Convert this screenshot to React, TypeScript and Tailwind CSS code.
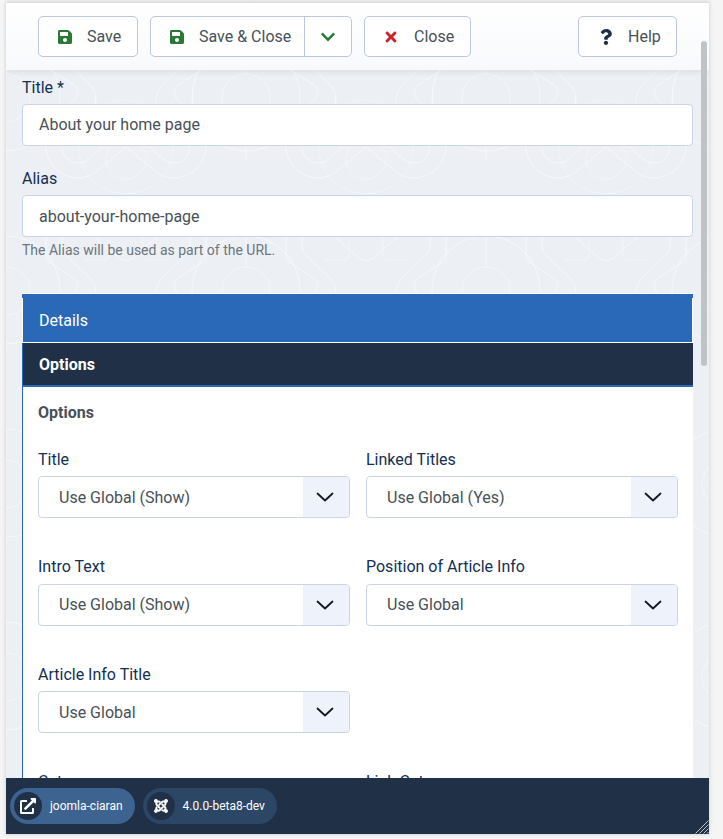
import { FaSave, FaChevronDown, FaTimes, FaQuestion, FaExternalLinkAlt, FaJoomla } from "react-icons/fa";

const fields = [
    { label: "Title", value: "Use Global (Show)" },
    { label: "Linked Titles", value: "Use Global (Yes)" },
    { label: "Intro Text", value: "Use Global (Show)" },
    { label: "Position of Article Info", value: "Use Global" },
    { label: "Article Info Title", value: "Use Global" },
    null,
    { label: "Category", value: "Use Global" },
    { label: "Link Category", value: "Use Global" },
];

function Backdrop() {
    const half = (
        <>
            <path d="M80 50V82A32 32 0 0 1 48 114Q36 114 28 106L0 83" />
            <path d="M64 70V83A16 16 0 0 1 48 99Q41 99 36 94L23 83" />
            <path d="M80 -40V3L52 21Q46 27 50 34L60 44" />
            <path d="M64 -40V-10Q64 -6 60 -2L34 23Q30 29 30 36V60" />
            <path d="M31 -20L6 2Q0 5 -6 2" />
            <path d="M17 -20V-3Q17 3 23 3H42" strokeOpacity="0.35" />
        </>
    );
    const tile = (
        <>
            {half}
            <g transform="translate(240 0) scale(-1 1)">{half}</g>
            <circle cx="120" cy="33" r="54" />
            <circle cx="120" cy="34" r="24" strokeOpacity="0.4" />
            <circle cx="0" cy="95" r="20" strokeOpacity="0.3" />
            <circle cx="240" cy="95" r="20" strokeOpacity="0.3" />
            <circle cx="0" cy="83" r="47" strokeOpacity="0.25" />
            <circle cx="240" cy="83" r="47" strokeOpacity="0.25" />
            <path d="M120 -20V10M120 82V96" strokeOpacity="0.4" />
        </>
    );
    return (
        <svg className="absolute inset-0 w-full h-full" aria-hidden="true">
            <defs>
                <pattern id="tile" width="240" height="193" patternUnits="userSpaceOnUse" patternTransform="translate(120 -6)">
                    <g fill="none" stroke="#ffffff" strokeOpacity="0.5" strokeWidth="1">
                        {tile}
                        <g transform="translate(0 193)">{tile}</g>
                        <g transform="translate(0 -193)">{tile}</g>
                    </g>
                </pattern>
            </defs>
            <rect width="100%" height="100%" fill="url(#tile)" />
        </svg>
    );
}

function SelectBox({ value }: { value: string }) {
    return (
        <div className="flex h-[42px] items-stretch overflow-hidden rounded-[4px] border border-[#c8d5e8] bg-white text-[#495057]">
            <div className="flex flex-1 items-center pl-5 pt-px">{value}</div>
            <div className="flex w-[46px] items-center justify-center bg-[#eef3fb] pr-[2px]">
                <svg width="18" height="10" viewBox="0 0 18 10" fill="none" stroke="#111827" strokeWidth="1.8" strokeLinecap="round" strokeLinejoin="round">
                    <path d="M1.5 1.5L9 8.5L16.5 1.5" />
                </svg>
            </div>
        </div>
    );
}

function TextField({ label, value, inputClass }: { label: string; value: string; inputClass?: string }) {
    return (
        <div>
            <div className="mb-[5px] h-6 leading-[26px] text-[#132f53]">{label}</div>
            <div className={`flex h-[42px] items-center rounded-[4px] border border-[#c8d5e8] bg-white pl-4 text-[#495057] ${inputClass ?? ""}`}>{value}</div>
        </div>
    );
}

export default function App() {
    return (
        <main className="h-[839px] w-[723px] overflow-hidden bg-[#f5f5f5] pb-[5px] pl-[6px] pr-[14px] pt-[2px] font-['Roboto',sans-serif] text-base">
            <div className="relative flex h-full flex-col overflow-hidden border-t border-[#dedede] shadow-[0_0_4px_rgba(0,0,0,0.18)]">
                {/* Toolbar */}
                <div className="relative z-10 flex h-[67px] shrink-0 items-start gap-3 bg-gradient-to-b from-white to-[#f7f9fc] px-8 pt-[13px] text-[#495057] shadow-[0_2px_6px_rgba(0,0,0,0.08)]">
                    <button className="flex h-[41px] w-[100px] items-center rounded-[5px] border border-[#bcc7db] bg-white pl-[18px]">
                        <FaSave className="text-[#2a7a35]" size={16} />
                        <span className="ml-[14px]">Save</span>
                    </button>
                    <div className="flex h-[41px] w-[202px] items-stretch rounded-[5px] border border-[#bcc7db] bg-white">
                        <button className="flex w-[154px] items-center border-r border-[#bcc7db] pl-[18px]">
                            <FaSave className="text-[#2a7a35]" size={16} />
                            <span className="ml-[14px]">Save &amp; Close</span>
                        </button>
                        <button className="flex flex-1 items-center justify-center">
                            <FaChevronDown className="text-[#2a7a35]" size={16} />
                        </button>
                    </div>
                    <button className="flex h-[41px] w-[107px] items-center rounded-[5px] border border-[#bcc7db] bg-white pl-[18px]">
                        <FaTimes className="text-[#c9252b]" size={16} />
                        <span className="ml-[15px]">Close</span>
                    </button>
                    <button className="ml-auto flex h-[41px] w-[99px] items-center rounded-[5px] border border-[#bcc7db] bg-white pl-[19px]">
                        <FaQuestion className="text-[#1f3047]" size={16} />
                        <span className="ml-[14px]">Help</span>
                    </button>
                </div>

                {/* Form */}
                <div className="relative flex-1 overflow-hidden bg-[#ecf0f5] px-4 pt-[5px]">
                    <Backdrop />
                    <div className="relative">
                        <TextField label="Title *" value="About your home page" />
                        <div className="mt-5">
                            <TextField label="Alias" value="about-your-home-page" inputClass="pt-[2px]" />
                        </div>
                        <div className="mt-[3px] text-sm leading-[21px] text-[#6d757e]">The Alias will be used as part of the URL.</div>

                        {/* Tabs */}
                        <div className="mt-[32px] border-t border-white bg-[#2a69b8] pt-1 text-white">
                            <div className="flex h-[45px] items-center border-x border-b border-white pl-4 pt-px">Details</div>
                        </div>
                        <div className="flex h-[44px] items-center border-b-2 border-l border-[#2a69b8] bg-[#1f3047] pl-4 pt-px font-bold text-white">Options</div>
                        <div className="h-[500px] border-l border-[#2a69b8] bg-white pl-[15px] pr-[15px] pt-[13px]">
                            <div className="mb-[23.5px] h-6 font-bold leading-[26px] text-[#495057]">Options</div>
                            <div className="grid grid-cols-2 gap-x-4 gap-y-[37px]">
                                {fields.map((field, idx) =>
                                    field ? (
                                        <div key={field.label}>
                                            <div className="mb-[4.5px] h-6 leading-6 text-[#132f53]">{field.label}</div>
                                            <SelectBox value={field.value} />
                                        </div>
                                    ) : (
                                        <div key={idx} />
                                    )
                                )}
                            </div>
                        </div>
                    </div>
                </div>

                {/* Status bar */}
                <div className="relative z-10 flex h-[56px] shrink-0 items-center gap-2 bg-[#1f3047] pl-1 text-xs text-white">
                    <div className="flex h-9 items-center gap-2 rounded-full bg-[#3d6390] pl-1 pr-3">
                        <span className="flex h-7 w-7 items-center justify-center rounded-full bg-[#1f3047]">
                            <FaExternalLinkAlt size={16} />
                        </span>
                        joomla-ciaran
                    </div>
                    <div className="flex h-9 items-center gap-2 rounded-full bg-[#2c4666] pl-1 pr-3">
                        <span className="flex h-7 w-7 items-center justify-center rounded-full bg-[#1f3047]">
                            <FaJoomla size={16} />
                        </span>
                        4.0.0-beta8-dev
                    </div>
                </div>

                {/* Scrollbar and resize grip */}
                <div className="absolute right-[2px] top-[38px] z-20 h-[325px] w-[6px] rounded-[3px] bg-[#bfc2c6]" />
                <svg className="absolute bottom-0 right-0 z-20" width="14" height="14" viewBox="0 0 14 14" stroke="#c4c8cf" strokeWidth="1" aria-hidden="true">
                    <path d="M13.5 0.5L0.5 13.5M13.5 4.5L4.5 13.5M13.5 8.5L8.5 13.5M13.5 12L12 13.5" />
                </svg>
            </div>
        </main>
    );
}
